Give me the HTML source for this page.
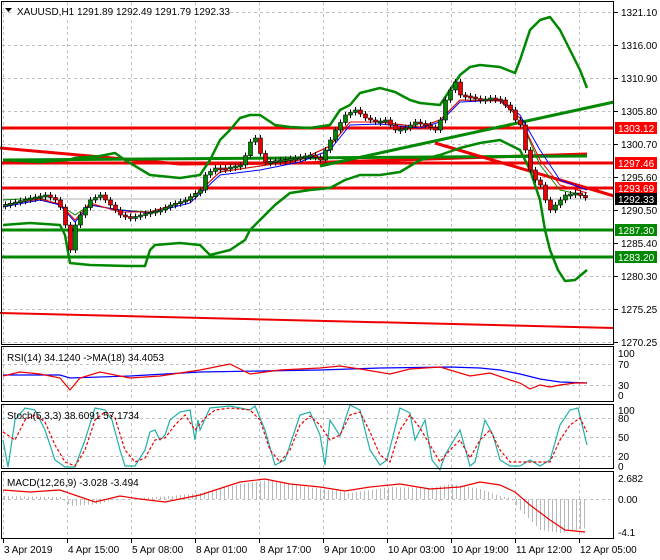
<!DOCTYPE html>
<html><head><meta charset="utf-8"><style>
html,body{margin:0;padding:0;background:#fff;}
svg{display:block;font-family:"Liberation Sans",sans-serif;font-size:10px;}
</style></head><body>
<svg id="s" width="660" height="560" viewBox="0 0 660 560" xmlns="http://www.w3.org/2000/svg">
<rect width="660" height="560" fill="#fff"/>
<g id="grid" stroke="#c0c0c0" stroke-dasharray="3,3" stroke-width="1"></g>
<g fill="none" stroke-linejoin="round">
<polyline stroke="#e00" stroke-width="2" points="0,313 614,328"/>
<polyline stroke="#e00" stroke-width="3" points="1,128 614,128"/>
<polyline stroke="#e00" stroke-width="3" points="1,163 614,163"/>
<polyline stroke="#e00" stroke-width="3" points="1,188 614,188"/>
<polyline stroke="#b0b0b0" stroke-width="1" points="1,199 614,199"/>
<polyline stroke="#080" stroke-width="3" points="1,230 614,230"/>
<polyline stroke="#080" stroke-width="3" points="1,257 614,257"/>
<polyline stroke="#e00" stroke-width="3" points="0,148 180,164 300,163 587,154"/>
<polyline stroke="#080" stroke-width="3" points="3,160 587,156"/>
<polyline stroke="#080" stroke-width="3" points="320,166 614,102"/>
<polyline stroke="#e00" stroke-width="3" points="435,143 614,196"/>
<polyline stroke="#080" stroke-width="2.5" points="3,160 40,162 68,160 75,158 100,156 115,153 125,160 150,175 180,178 200,175 210,160 220,140 230,130 240,118 250,115 260,115 275,125 290,127 310,128 330,125 340,110 350,105 360,93 380,88 395,92 410,100 420,103 440,105 450,90 460,75 470,67 480,65 500,67 515,73 520,60 530,30 540,20 550,17 560,30 570,50 580,70 587,88"/>
<polyline stroke="#080" stroke-width="2.5" points="3,225 30,223 60,225 65,235 70,263 90,265 130,266 145,266 150,250 155,245 180,243 200,245 210,255 230,250 245,240 250,230 260,220 275,205 290,193 310,190 330,188 345,180 360,175 380,175 400,172 420,160 440,155 460,148 480,143 500,140 520,150 530,170 540,200 545,230 550,250 558,270 565,281 575,280 587,270"/>
<polyline stroke="#080" stroke-width="1" points="3,200 40,198 60,205 75,215 90,205 120,210 150,212 190,200 220,172 260,166 300,160 330,146 350,122 380,122 420,127 440,120 460,100 500,101 520,118 540,165 560,190 587,196"/>
<polyline stroke="#00f" stroke-width="1" points="3,207 40,200 60,205 75,222 90,205 120,210 150,213 190,203 220,175 260,170 300,162 330,150 350,125 380,124 420,128 440,122 460,102 500,100 520,115 540,150 560,180 587,190"/>
<polyline stroke="#e00" stroke-width="1" points="3,205 40,199 60,204 75,220 90,203 120,212 150,212 190,200 220,172 260,166 300,160 330,146 350,122 380,122 420,127 440,120 460,100 500,101 520,118 540,160 560,185 587,193"/>
</g>
<g id="candles"></g>
<g fill="none" stroke-width="1.2">
<polyline stroke="#00f" points="3,375 60,375 70,378 130,376 200,372 260,371 320,370 380,368 450,367 480,368 500,370 520,374 540,379 560,382 587,383"/>
<polyline stroke="#e00" points="3,376 20,372 40,374 60,378 70,390 80,378 100,372 130,378 160,376 200,370 230,364 250,374 280,370 320,368 340,366 360,369 390,374 410,369 440,367 470,376 490,373 510,380 520,383 530,389 540,385 550,387 560,385 575,383 587,383"/>
</g>
<g fill="none" stroke-width="1.2">
<polyline stroke="#20b0a8" points="3,440 8,467 15,420 25,408 35,410 45,430 55,460 65,467 75,467 85,440 95,408 105,410 112,420 120,450 125,466 135,466 145,450 150,432 155,430 160,440 165,435 170,420 180,412 190,410 195,440 198,420 200,430 210,408 230,406 250,410 255,406 265,430 275,465 285,460 295,430 300,415 310,412 320,435 325,465 330,420 340,436 350,405 360,410 370,450 380,465 387,460 392,440 400,408 410,413 415,440 420,430 425,420 432,460 440,470 445,455 460,430 470,466 475,462 485,420 493,435 500,460 510,466 520,466 530,460 540,466 550,460 560,425 570,410 578,408 587,445"/>
<polyline stroke="#e00" stroke-dasharray="3,2" points="3,432 15,440 25,420 35,415 45,422 55,445 65,462 75,466 85,450 95,420 105,412 115,418 125,450 135,462 145,458 155,440 165,438 175,425 185,415 195,430 205,418 215,410 230,408 250,410 260,420 270,450 280,462 290,450 300,425 310,416 320,425 330,440 340,435 350,415 360,412 370,432 380,455 390,462 400,430 410,415 420,428 430,445 440,462 450,450 460,440 470,458 480,440 490,430 500,450 510,462 520,462 530,462 540,462 550,462 560,440 570,425 580,418 587,432"/>
</g>
<g id="hist" stroke="#b8b8b8" stroke-width="1"></g>
<polyline fill="none" stroke="#e00" stroke-width="1.2" points="3,490 30,492 60,490 95,502 120,496 140,499 165,502 200,495 240,482 265,479 290,484 320,487 345,491 370,487 400,484 430,489 460,487 480,482 500,485 515,492 530,505 550,520 565,530 585,532"/>
<g fill="none" stroke="#000" stroke-width="1">
<rect x="1.5" y="1.5" width="612" height="343"/>
<rect x="1.5" y="346.5" width="612" height="55"/>
<rect x="1.5" y="404.5" width="612" height="64"/>
<rect x="1.5" y="471.5" width="612" height="67"/>
</g>
<g id="axis" fill="#000"></g>
<rect x="14" y="5" width="215" height="13" fill="#fff"/>
<text x="17" y="15">XAUUSD,H1  1291.89 1292.49 1291.79 1292.33</text>
<polygon points="5,8 12,8 8.5,12" fill="#000"/>
<text x="7" y="361">RSI(14) 34.1240  -&gt;MA(18) 34.4053</text>
<text x="7" y="419">Stoch(5,3,3) 38.6091 57.1734</text>
<text x="7" y="486">MACD(12,26,9) -3.028 -3.494</text>
</svg>
<script>
(function(){
var NS="http://www.w3.org/2000/svg";
function el(p,t,a,txt){var e=document.createElementNS(NS,t);for(var k in a)e.setAttribute(k,String(a[k]));if(txt)e.textContent=txt;p.appendChild(e);return e;}
var g=document.getElementById('grid'),x,y;
for(x=3;x<614;x+=64){[[2,344],[347,401],[405,468],[472,538]].forEach(function(r){el(g,'line',{x1:x+.5,y1:r[0],x2:x+.5,y2:r[1]});});}
for(y=12;y<344;y+=33)el(g,'line',{x1:2,y1:y+.5,x2:613,y2:y+.5});
[364,385,418,437,456,499].forEach(function(yy){el(g,'line',{x1:2,y1:yy+.5,x2:613,y2:yy+.5});});
var ax=document.getElementById('axis');
var pr=["1321.10","1316.00","1310.90","1305.80","1300.70","1295.60","1290.50","1285.40","1280.30","1275.25","1270.25"];
pr.forEach(function(p,i){var yy=12+33*i;el(ax,'line',{x1:614,y1:yy+.5,x2:618,y2:yy+.5,stroke:'#000'});el(ax,'text',{x:621,y:yy+4},p);});
[["1303.12",128,"#f00"],["1297.46",163,"#f00"],["1293.69",188,"#f00"],["1292.33",199,"#000"],["1287.30",230,"#080"],["1283.20",257,"#080"]].forEach(function(l){el(ax,'rect',{x:615,y:l[1]-6,width:42,height:12,fill:l[2]});el(ax,'text',{x:618,y:l[1]+4,fill:'#fff'},l[0]);});
[["100",353],["70",364],["30",385],["0",395],["100",410],["80",418],["50",437],["20",456],["0",466],["2.682",478],["0.00",499],["-4.1",532]].forEach(function(l){el(ax,'text',{x:618,y:l[1]+4},l[0]);});
var d=["3 Apr 2019","4 Apr 15:00","5 Apr 08:00","8 Apr 01:00","8 Apr 17:00","9 Apr 10:00","10 Apr 03:00","10 Apr 19:00","11 Apr 12:00","12 Apr 05:00"];
d.forEach(function(t,i){var xx=3+64*i;el(ax,'line',{x1:xx+.5,y1:539,x2:xx+.5,y2:543,stroke:'#000'});el(ax,'text',{x:xx+1,y:553},t);});
function interp(pts,xv){for(var i=1;i<pts.length;i++){if(xv<=pts[i][0]){var a=pts[i-1],b=pts[i];return a[1]+(b[1]-a[1])*(xv-a[0])/(b[0]-a[0]);}}return pts[pts.length-1][1];}
var hp=[[3,496],[60,497],[70,506],[100,504],[110,500],[170,496],[200,493],[240,484],[270,480],[300,486],[330,490],[350,493],[390,487],[430,488],[450,484],[480,489],[500,496],[510,498],[520,510],[540,530],[560,533],[575,530],[587,528]];
var h=document.getElementById('hist');
for(x=4;x<=587;x+=4){el(h,'line',{x1:x+.5,y1:499,x2:x+.5,y2:interp(hp,x)});}
var pp=[[3,205],[15,202],[30,198],[45,195],[55,200],[62,210],[65,225],[70,250],[75,225],[80,215],[90,200],[100,195],[110,205],[120,215],[130,218],[140,215],[150,212],[160,210],[170,205],[185,200],[200,190],[205,175],[215,168],[225,168],[240,165],[248,150],[253,130],[258,150],[265,162],[280,160],[295,158],[310,155],[320,160],[325,150],[335,130],[345,115],[355,110],[365,118],[375,122],[385,120],[395,130],[405,128],[415,122],[425,125],[435,130],[440,120],[445,100],[450,90],[455,82],[460,95],[470,97],[480,100],[490,98],[500,100],[510,110],[515,120],[520,125],[525,150],[530,170],[535,180],[540,185],[545,200],[550,210],[555,205],[560,200],[565,195],[575,193],[583,197],[588,199]];
var c=document.getElementById('candles');var prev=205;
for(x=5;x<=587;x+=5){var v=interp(pp,x);var lo=Math.min(prev,v),hi=Math.max(prev,v);if(hi-lo<2){hi=lo+2;}
el(c,'line',{x1:x+.5,y1:lo-3,x2:x+.5,y2:hi+3,stroke:'#000'});
el(c,'rect',{x:x-1.5,y:lo,width:4,height:hi-lo,fill:(v<prev?'#080':'#e00'),stroke:'#000','stroke-width':0.6});prev=v;}
})();
</script>
</body></html>
